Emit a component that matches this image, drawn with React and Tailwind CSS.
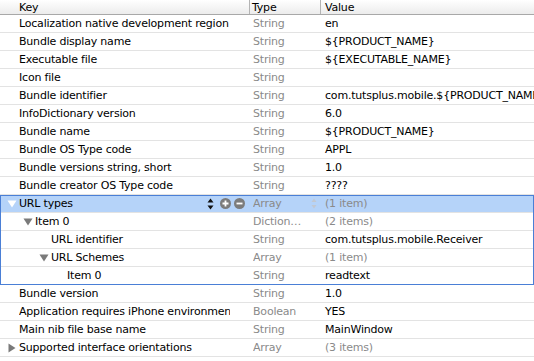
import { useState } from 'react';

const rows = [
  { key: 'Localization native development region', type: 'String', value: 'en' },
  { key: 'Bundle display name', type: 'String', value: '${PRODUCT_NAME}' },
  { key: 'Executable file', type: 'String', value: '${EXECUTABLE_NAME}' },
  { key: 'Icon file', type: 'String', value: '' },
  { key: 'Bundle identifier', type: 'String', value: 'com.tutsplus.mobile.${PRODUCT_NAME:rfc1034identifier}' },
  { key: 'InfoDictionary version', type: 'String', value: '6.0' },
  { key: 'Bundle name', type: 'String', value: '${PRODUCT_NAME}' },
  { key: 'Bundle OS Type code', type: 'String', value: 'APPL' },
  { key: 'Bundle versions string, short', type: 'String', value: '1.0' },
  { key: 'Bundle creator OS Type code', type: 'String', value: '????' },
];

const group = [
  { key: 'URL types', level: 0, toggle: 'open', type: 'Array', value: '(1 item)', muted: true, selected: true },
  { key: 'Item 0', level: 1, toggle: 'open', type: 'Dictionary', value: '(2 items)', muted: true },
  { key: 'URL identifier', level: 2, type: 'String', value: 'com.tutsplus.mobile.Receiver' },
  { key: 'URL Schemes', level: 2, toggle: 'open', type: 'Array', value: '(1 item)', muted: true },
  { key: 'Item 0', level: 3, type: 'String', value: 'readtext' },
];

const tail = [
  { key: 'Bundle version', type: 'String', value: '1.0' },
  { key: 'Application requires iPhone environment', type: 'Boolean', value: 'YES' },
  { key: 'Main nib file base name', type: 'String', value: 'MainWindow' },
  { key: 'Supported interface orientations', toggle: 'closed', type: 'Array', value: '(3 items)', muted: true },
];

function Disclosure({ state, light }) {
  const fill = light ? '#ffffff' : '#7a7a7a';
  if (state === 'open') {
    return (
      <svg width="10" height="8" viewBox="0 0 10 8" className="shrink-0">
        <path d="M0.5 0.5 L9.5 0.5 L5 7.5 Z" fill={fill} />
      </svg>
    );
  }
  return (
    <svg width="8" height="10" viewBox="0 0 8 10" className="ml-[1px] shrink-0">
      <path d="M0.5 0.5 L7.5 5 L0.5 9.5 Z" fill={fill} />
    </svg>
  );
}

function RowTools() {
  return (
    <div className="flex shrink-0 items-center gap-[3px] pr-[5px]">
      <svg width="7" height="12" viewBox="0 0 7 12" className="mr-[3px]">
        <path d="M3.5 0.5 L6.5 4.5 L0.5 4.5 Z" fill="#111" />
        <path d="M3.5 11.5 L6.5 7.5 L0.5 7.5 Z" fill="#111" />
      </svg>
      <svg width="11" height="11" viewBox="0 0 11 11">
        <circle cx="5.5" cy="5.5" r="5.5" fill="#7c7c7c" />
        <path d="M5.5 2.5 V8.5 M2.5 5.5 H8.5" stroke="#fff" strokeWidth="1.8" />
      </svg>
      <svg width="11" height="11" viewBox="0 0 11 11">
        <circle cx="5.5" cy="5.5" r="5.5" fill="#7c7c7c" />
        <path d="M2.5 5.5 H8.5" stroke="#fff" strokeWidth="1.8" />
      </svg>
    </div>
  );
}

function Row({ row }) {
  const level = row.level || 0;
  return (
    <div
      className={`flex h-[18px] items-center border-b border-[#e3e3e3] ${
        row.selected ? 'bg-[#b5d3f9]' : 'bg-white'
      }`}
    >
      <div
        className={`flex w-[250px] shrink-0 items-center overflow-hidden ${row.selected ? '' : 'pr-[20px]'}`}
        style={{ paddingLeft: 7 + level * 16 }}
      >
        <div className="flex w-[12px] shrink-0 items-center">
          {row.toggle && <Disclosure state={row.toggle} light={row.selected} />}
        </div>
        <span className="min-w-0 flex-1 overflow-hidden whitespace-nowrap text-black">{row.key}</span>
        {row.selected && <RowTools />}
      </div>
      <div className="flex w-[71px] shrink-0 items-center pl-[3px] text-[#8a8a8a]">
        <span className="w-[52px] shrink-0 truncate">{row.type}</span>
        {row.selected && (
          <svg width="6" height="11" viewBox="0 0 6 11" className="ml-[6px] shrink-0">
            <path d="M3 0.5 L5.5 4 L0.5 4 Z" fill="#c2c8d2" />
            <path d="M3 10.5 L5.5 7 L0.5 7 Z" fill="#c2c8d2" />
          </svg>
        )}
      </div>
      <div className={`min-w-0 flex-1 whitespace-nowrap pl-[4px] ${row.muted ? 'text-[#8a8a8a]' : 'text-black'}`}>
        {row.value}
      </div>
    </div>
  );
}

export default function App() {
  const [list] = useState({ rows, group, tail });

  return (
    <div
      className="h-[361px] w-[534px] overflow-hidden bg-white text-[11px] leading-none tracking-[-0.2px]"
      style={{ fontFamily: '"DejaVu Sans", Verdana, sans-serif' }}
    >
      <div className="flex h-[15px] items-stretch border-b border-[#a8a8a8] bg-gradient-to-b from-white to-[#ececec] text-black">
        <div className="flex w-[250px] shrink-0 items-center border-r border-[#b4b4b4] pl-[19px]">Key</div>
        <div className="flex w-[71px] shrink-0 items-center border-r border-[#b4b4b4] pl-[2px]">Type</div>
        <div className="flex flex-1 items-center pl-[4px]">Value</div>
      </div>

      {list.rows.map((row, i) => (
        <Row key={'r' + i} row={row} />
      ))}

      <div className="outline-1 -outline-offset-1 outline-[#4a7fd6]">
        {list.group.map((row, i) => (
          <Row key={'g' + i} row={row} />
        ))}
      </div>

      {list.tail.map((row, i) => (
        <Row key={'t' + i} row={row} />
      ))}
    </div>
  );
}
